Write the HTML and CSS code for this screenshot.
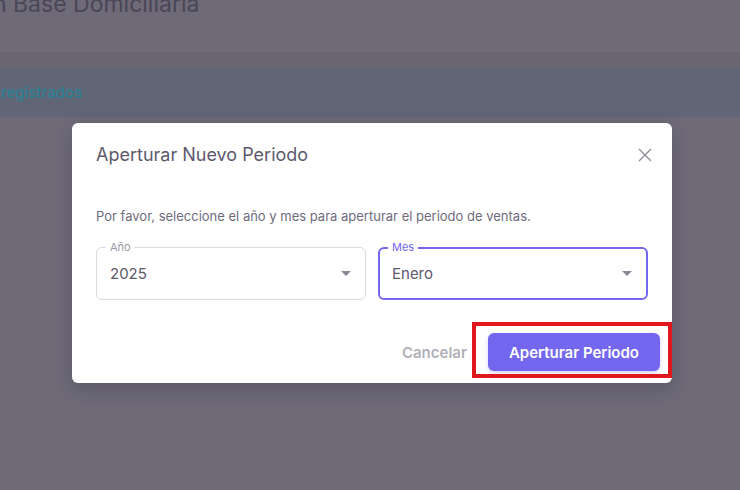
FILE: index.html
```html
<!DOCTYPE html>
<html>
<head>
    <meta charset="UTF-8">
    <meta name="viewport" content="width=device-width, initial-scale=1.0">
    <title>Aperturar Nuevo Periodo</title>
    <link rel="stylesheet" href="styles.css">
</head>
<body>
    <div class="page">
        <h1 class="page-title">n Base Domiciliaria</h1>
        <div class="page-band"></div>
        <div class="page-alert">registrados</div>
    </div>

    <div class="modal">
        <div class="modal-header">
            <h2 class="modal-title">Aperturar Nuevo Periodo</h2>
            <button class="modal-close" aria-label="Cerrar">
                <svg width="14" height="14" viewBox="0 0 14 14">
                    <path d="M1 1L13 13M13 1L1 13" stroke="#8d8a96" stroke-width="1.3" fill="none"/>
                </svg>
            </button>
        </div>
        <p class="modal-text">Por favor, seleccione el año y mes para aperturar el periodo de ventas.</p>
        <div class="fields">
            <div class="field">
                <span class="field-label">Año</span>
                <span class="field-value">2025</span>
                <span class="field-arrow"></span>
            </div>
            <div class="field field-focus">
                <span class="field-label">Mes</span>
                <span class="field-value">Enero</span>
                <span class="field-arrow"></span>
            </div>
        </div>
        <div class="modal-footer">
            <button class="btn-cancel">Cancelar</button>
            <button class="btn-primary">Aperturar Periodo<span class="highlight"></span></button>
        </div>
    </div>
</body>
</html>
```

FILE: styles.css
```css
body {
    margin: 0;
    background: #6e6a78;
    font-family: Inter, "Noto Sans", sans-serif;
    height: 490px;
    overflow: hidden;
}

.page-title {
    margin: 0 0 0 -7px;
    height: 52px;
    font-size: 23px;
    font-weight: 400;
    line-height: 20px;
    color: #4a4657;
    position: relative;
    top: -6px;
}

.page-band {
    height: 16px;
    background: #6a6572;
}

.page-alert {
    height: 49px;
    background: #606675;
    color: #2b8196;
    font-size: 15px;
    font-weight: 500;
    line-height: 49px;
    padding-left: 1px;
}

.modal {
    position: absolute;
    left: 72px;
    top: 123px;
    width: 600px;
    background: #fff;
    border-radius: 6px;
    box-shadow: 0 6px 18px rgba(40, 36, 52, 0.25);
    padding: 20px 24px 12px;
    box-sizing: border-box;
}

.modal-header {
    display: flex;
    justify-content: space-between;
    align-items: center;
}

.modal-title {
    margin: 0;
    font-size: 18px;
    font-weight: 400;
    line-height: 24px;
    color: #5d596c;
}

.modal-close {
    border: none;
    background: none;
    padding: 0;
    margin-right: -4px;
    display: flex;
}

.modal-text {
    margin: 39px 0 0;
    font-size: 13px;
    line-height: 20px;
    color: #6f6b7d;
}

.fields {
    display: grid;
    grid-template-columns: 1fr 1fr;
    gap: 12px;
    margin-top: 21px;
}

.field {
    position: relative;
    height: 53px;
    border: 1px solid #dbdade;
    border-radius: 6px;
    box-sizing: border-box;
    display: flex;
    align-items: center;
    padding: 0 14px 0 13px;
}

.field-focus {
    border: 2px solid #7367f0;
    padding-left: 12px;
}

.field-label {
    position: absolute;
    left: 9px;
    top: -7px;
    padding: 0 4px;
    background: #fff;
    font-size: 11px;
    line-height: 13px;
    color: #9a98a4;
}

.field-focus .field-label {
    left: 8px;
    top: -8px;
    color: #7367f0;
}

.field-value {
    flex: 1;
    font-size: 15px;
    color: #5d596c;
}

.field-arrow {
    width: 0;
    height: 0;
    border-left: 5px solid transparent;
    border-right: 5px solid transparent;
    border-top: 5px solid #8a8795;
}

.modal-footer {
    display: flex;
    justify-content: flex-end;
    align-items: center;
    gap: 21px;
    margin: 33px -12px 0 0;
}

.btn-cancel {
    border: none;
    background: none;
    padding: 0;
    font-family: inherit;
    font-size: 15px;
    font-weight: 600;
    color: #b1afb8;
}

.btn-primary {
    position: relative;
    height: 38px;
    padding: 0 21px;
    border: none;
    border-radius: 6px;
    background: #7367f0;
    color: #fff;
    font-family: inherit;
    font-size: 15px;
    font-weight: 600;
    box-shadow: 0 2px 4px rgba(115, 103, 240, 0.3);
}

.highlight {
    position: absolute;
    left: -16px;
    right: -12px;
    top: -11px;
    bottom: -7px;
    border: 4px solid #e2161d;
}
```
